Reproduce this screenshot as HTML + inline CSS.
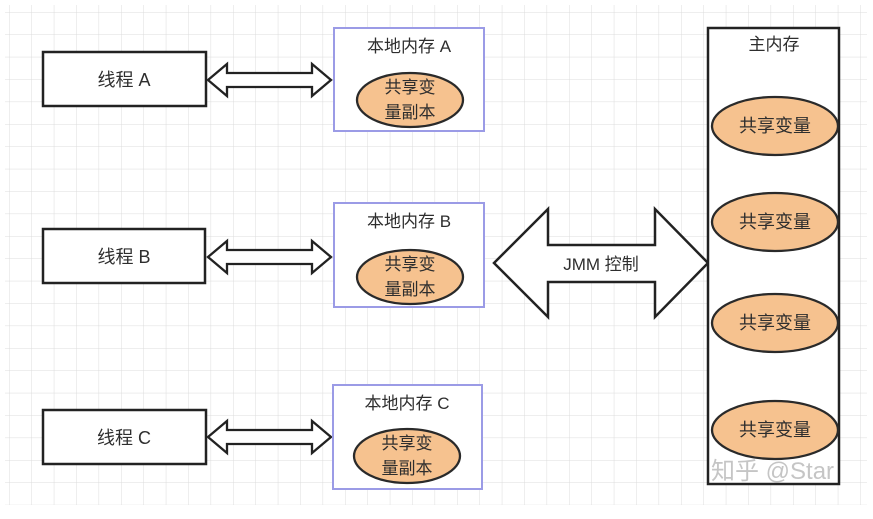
<!DOCTYPE html>
<html><head><meta charset="utf-8"><style>
html,body{margin:0;padding:0;background:#fff;}
svg{display:block}
text{font-family:"Liberation Sans","Noto Sans CJK SC",sans-serif;fill:#2e2e2e}
</style></head><body>
<svg width="873" height="519" viewBox="0 0 873 519" xmlns="http://www.w3.org/2000/svg">
<defs>
<pattern id="g" x="9" y="12" width="22.4" height="22.4" patternUnits="userSpaceOnUse">
<path d="M0 0H22.4M0 0V22.4" stroke="#dcdcdc" stroke-width="1" fill="none"/>
</pattern>
</defs>
<rect x="5" y="5" width="862" height="500" fill="url(#g)"/>

<g stroke="#222" stroke-width="2.5" fill="#fff">
<rect x="43" y="52" width="163" height="54"/>
<rect x="43" y="229" width="162" height="54"/>
<rect x="43" y="410" width="163" height="54"/>
</g>
<g font-size="18" text-anchor="middle">
<text x="124" y="86">线程 A</text>
<text x="124" y="263">线程 B</text>
<text x="124" y="444">线程 C</text>
</g>

<g stroke="#222" stroke-width="2.3" fill="#fff" stroke-linejoin="miter">
<path d="M208 80 L227 64 V73 H312 V64 L331 80 L312 96 V87 H227 V96 Z"/>
<path d="M208 257 L227 241 V250 H312 V241 L331 257 L312 273 V264 H227 V273 Z"/>
<path d="M208 437 L227 421 V430 H312 V421 L331 437 L312 453 V444 H227 V453 Z"/>
</g>

<g stroke="#9b9be6" stroke-width="2" fill="#fff">
<rect x="334" y="28" width="150" height="103"/>
<rect x="334" y="203" width="150" height="104"/>
<rect x="333" y="385" width="149" height="104"/>
</g>
<g font-size="17" text-anchor="middle">
<text x="409" y="52">本地内存 A</text>
<text x="409" y="227">本地内存 B</text>
<text x="407" y="409">本地内存 C</text>
</g>
<g fill="#f6c28f" stroke="#2a2a2a" stroke-width="2.3">
<ellipse cx="410" cy="100" rx="53" ry="27"/>
<ellipse cx="410" cy="277" rx="53" ry="27"/>
<ellipse cx="407" cy="456" rx="53" ry="27"/>
</g>
<g font-size="17" text-anchor="middle">
<text x="410" y="93">共享变</text><text x="410" y="118">量副本</text>
<text x="410" y="270">共享变</text><text x="410" y="295">量副本</text>
<text x="407" y="449">共享变</text><text x="407" y="474">量副本</text>
</g>

<path d="M494 263 L548 209 V245 H655 V209 L708 263 L655 317 V282 H548 V317 Z" fill="#fff" stroke="#222" stroke-width="2.5" stroke-linejoin="miter"/>
<text x="601" y="270" font-size="17" text-anchor="middle">JMM 控制</text>

<rect x="708" y="28" width="131" height="456" fill="#fff" stroke="#222" stroke-width="2.5"/>
<text x="774" y="50" font-size="17" text-anchor="middle">主内存</text>
<g fill="#f6c28f" stroke="#2a2a2a" stroke-width="2.3">
<ellipse cx="775" cy="126" rx="63" ry="29"/>
<ellipse cx="775" cy="222" rx="63" ry="29"/>
<ellipse cx="775" cy="323" rx="63" ry="29"/>
<ellipse cx="775" cy="430" rx="63" ry="29"/>
</g>
<g font-size="18" text-anchor="middle">
<text x="775" y="132">共享变量</text>
<text x="775" y="228">共享变量</text>
<text x="775" y="329">共享变量</text>
<text x="775" y="436">共享变量</text>
</g>
<text x="711" y="479" font-size="24" style="fill:#bbb;opacity:0.85">知乎 @Star</text>
</svg>
</body></html>
